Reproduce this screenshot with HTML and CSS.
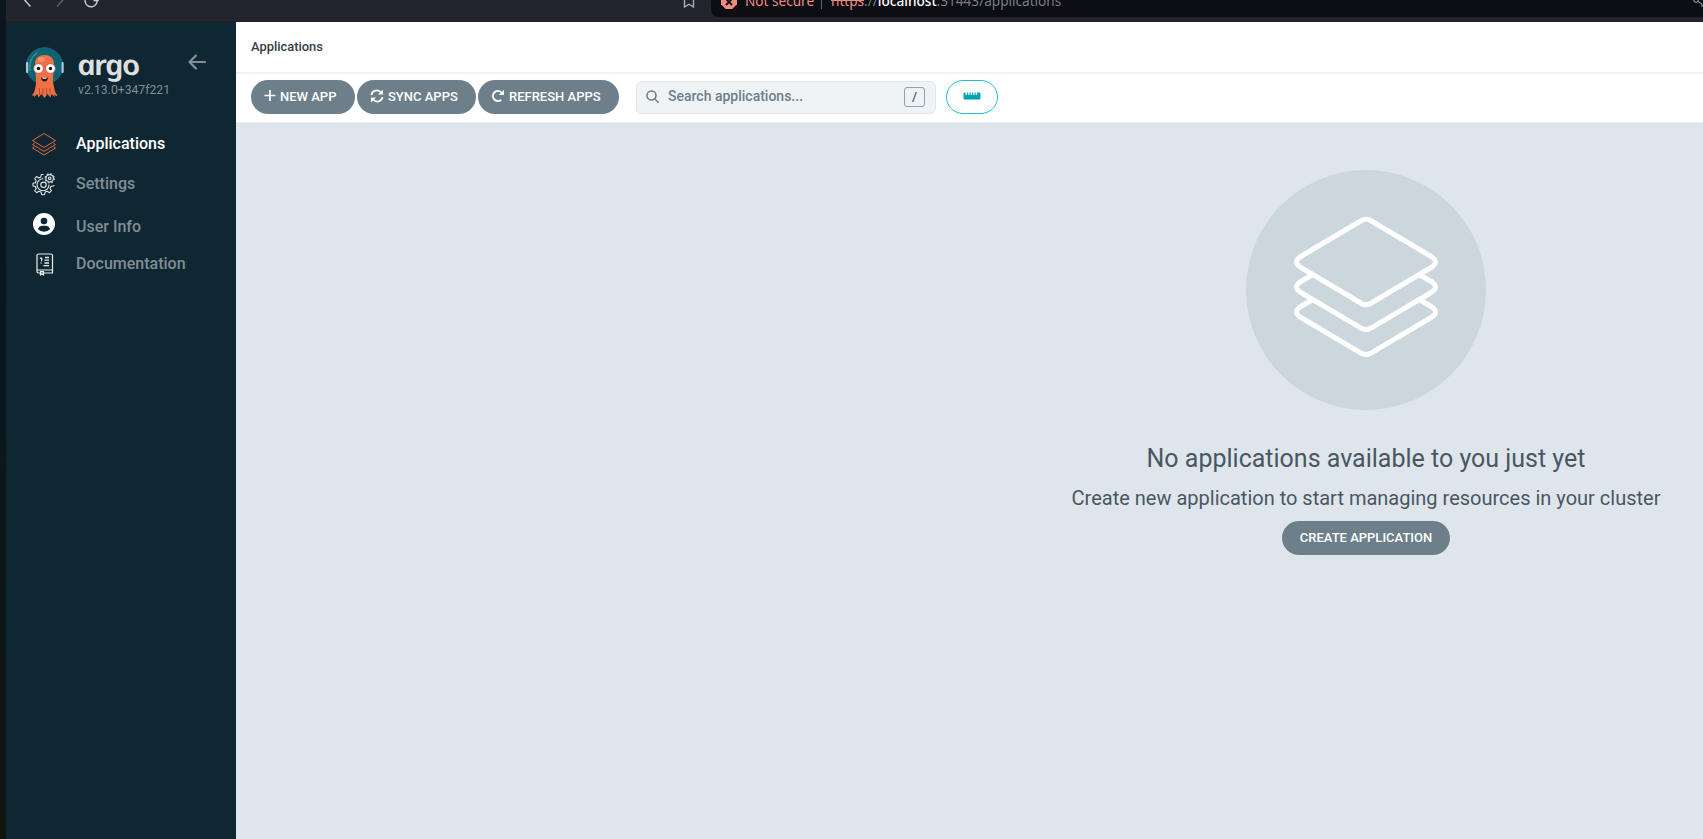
FILE: index.html
```html
<!DOCTYPE html>
<html lang="en">
<head>
<meta charset="utf-8">
<title>Applications</title>
<link rel="stylesheet" href="styles.css">
</head>
<body>
<div class="desktop-edge"></div>
<div class="window">
  <div class="browser">
    <div class="browser-left">
      <svg class="nav-icons" width="120" height="22" viewBox="0 0 120 22" fill="none" stroke-width="1.5">
        <path d="M24.500-6 19 0.500 24.500 6.500" stroke="#c3c8d8"/>
        <path d="M51-6 56.500 0.500 51 6.500" stroke="#5c606c"/>
        <path d="M90.800-1A6 6 0 1 1 85-5.200" stroke="#c3c8d8"/>
        <path d="M87.500 0.500H92V-3" stroke="#c3c8d8"/>
      </svg>
      <svg class="bookmark" width="12" height="22" viewBox="0 0 12 22" fill="none" stroke="#a9adb8" stroke-width="1.400">
        <path d="M1.500-5V7L6 4.200 10.500 7V-5"/>
      </svg>
    </div>
    <div class="address">
      <svg class="warn" width="16" height="17" viewBox="0 0 16 17">
        <path d="M4.700-7H11.300L16-2.300V4.300L11.300 9H4.700L0 4.300V-2.300Z" fill="#f28b82"/>
        <path d="M5-1 11 5M11-1 5 5" stroke="#0d0e13" stroke-width="1.800"/>
      </svg>
      <span class="not-secure">Not secure</span>
      <span class="divider"></span>
      <span class="url"><s>https</s>://<b>localhost</b>:31443/applications</span>
      <svg class="share" width="10" height="17" viewBox="0 0 10 17" fill="none" stroke="#aeb1b9">
        <circle cx="3" cy="0" r="2.300"/><path d="M5 1.500 9 4V7"/>
      </svg>
    </div>
  </div>
  <div class="app">
    <nav class="sidebar">
      <div class="brand">
        <svg class="mascot" width="40" height="53" viewBox="0 0 40 53">
          <circle cx="19.500" cy="20" r="18.300" fill="#0d6470" stroke="#225f76" stroke-width="1"/>
          <path d="M5 25C4 16 7 10 12 7" fill="none" stroke="#3d8793" stroke-width="1.500"/>
          <rect x="1" y="16" width="2.200" height="11" rx="1" fill="#a8c8e2"/>
          <rect x="36.500" y="16" width="2.200" height="11" rx="1" fill="#a8c8e2"/>
          <path d="M10 18C10 12 14 9 19.500 9S29 12 29 18C29 24 28 28 28 33 28 38 28 44 30 51L26.500 48 25.500 51.500 22.500 48 19.500 52 16.500 48 13.500 51.500 12.500 48 9 51C11 44 11 38 11 33 11 28 10 24 10 18Z" fill="#ee7147"/>
          <path d="M14.500 42V49M18 42V49M21.500 42V49M25 42V48" stroke="#bd4b2e" stroke-width="1"/>
          <path d="M12 38C10.500 44 11 48 7.500 49.500M27.500 38C29 44 28.500 48 32 49.500" fill="none" stroke="#ee7147" stroke-width="1.800"/>
          <ellipse cx="16.500" cy="13.500" rx="3.500" ry="2.300" fill="#f59372"/>
          <circle cx="13.500" cy="22.500" r="4.800" fill="#fff" stroke="#cf4e33" stroke-width=".7"/>
          <circle cx="25.500" cy="22.500" r="4.800" fill="#fff" stroke="#cf4e33" stroke-width=".7"/>
          <circle cx="13.500" cy="22.500" r="1.700" fill="#111"/><circle cx="25.500" cy="22.500" r="1.700" fill="#111"/>
          <path d="M16 31.500Q19.500 33 23 31.500 22.500 35.500 19.500 35.500T16 31.500Z" fill="#201417"/>
          <path d="M17.500 32Q19.500 33 21.500 32" stroke="#fff" fill="none"/>
        </svg>
        <div class="brand-text">
          <div class="wordmark">argo</div>
          <div class="version">v2.13.0+347f221</div>
        </div>
        <svg class="collapse" width="18" height="16" viewBox="0 0 18 16" fill="none" stroke="#858e94" stroke-width="2.200" stroke-linecap="round" stroke-linejoin="round">
          <path d="M8 1.500 1.500 8 8 14.500M1.500 8H17"/>
        </svg>
      </div>
      <ul class="menu">
        <li class="item active">
          <svg width="26" height="26" viewBox="0 0 26 26" fill="none" stroke="#e5683c" stroke-width="1" stroke-linejoin="round">
            <path d="M13 2.500 24.500 9.500 13 16.500 1.500 9.500Z"/><path d="M3.500 12 1.500 13.500 13 20.300 24.500 13.500 22.500 12M3.500 15.500 1.500 17 13 24 24.500 17 22.500 15.500"/>
          </svg>
          <span>Applications</span>
        </li>
        <li class="item settings">
          <svg width="26" height="26" viewBox="0 0 26 26" fill="none" stroke="#e4e8ea" stroke-width="1.100" stroke-linejoin="round">
            <path d="M12.500 3.500 10.300 3.500 9.800 6 7.700 7 5.500 5.500 3.700 7.500 5.200 9.700 4.400 11.800 2 12.300V15L4.400 15.500 5.200 17.500 3.700 19.700 5.700 21.700 7.900 20.200 10 21 10.700 23.700H13.500L14.200 21 16.200 20.200 18.500 21.700 20.500 19.700 19 17.500 19.900 15.500 23.500 14.500"/>
            <path d="M12.500 7.800A6 6 0 1 0 18 13.500"/><circle cx="12.500" cy="13.800" r="2.700"/>
            <circle cx="18.700" cy="7.300" r="3.700"/><circle cx="18.700" cy="7.300" r="1.300"/><circle cx="18.700" cy="7.300" r="4.600" stroke-dasharray="1.800 1.812"/>
          </svg>
          <span>Settings</span>
        </li>
        <li class="item user">
          <svg width="26" height="26" viewBox="0 0 26 26">
            <circle cx="13" cy="13" r="11" fill="#fff"/><circle cx="13" cy="10" r="3.300" fill="#0f2733"/>
            <path d="M6.800 18Q8.500 14.700 11 14.700H15Q17.500 14.700 19.200 18 16.500 20.800 13 20.800T6.800 18Z" fill="#0f2733"/>
          </svg>
          <span>User Info</span>
        </li>
        <li class="item docs">
          <svg width="26" height="26" viewBox="0 0 26 26" fill="none" stroke="#e8ebed" stroke-width="1.200">
            <path d="M7.500 3H20Q21.500 3 21.500 4.500V22H7.500Q6 22 6 20.500V4.500Q6 3 7.500 3ZM6 20.500Q6 19 7.500 19H21.500"/>
            <path d="M14 6.500H18M13.500 9.200H18M13.500 12H18M12.500 14.700H18M9 7.500Q10.800 6 10.800 8T10 10M10 11.500V12.500" stroke-width="1.300"/>
            <path d="M9.500 20.500V24L11 23 12.500 24V20.500Z"/>
          </svg>
          <span>Documentation</span>
        </li>
      </ul>
    </nav>
    <main class="main">
      <header class="topbar">Applications</header>
      <div class="toolbar">
        <button class="btn btn-new"><svg width="12" height="14" viewBox="0 0 12 14" fill="none" stroke="#fff" stroke-width="1.700"><path d="M6 1V12M.500 6.500H11.500"/></svg>NEW APP</button>
        <button class="btn btn-sync"><svg width="14" height="14" viewBox="0 0 14 14" fill="none" stroke="#fff" stroke-width="1.800"><path d="M1.500 6A5.200 5.200 0 0 1 10.800 3.500M12.500 8A5.200 5.200 0 0 1 3.200 10.500"/><path d="M13 .500V5.400H8ZM1 13.500V8.600H6Z" fill="#fff" stroke="none"/></svg>SYNC APPS</button>
        <button class="btn btn-refresh"><svg width="14" height="14" viewBox="0 0 14 14" fill="none" stroke="#fff" stroke-width="1.900"><path d="M10.300 10.700A5 5 0 1 1 10.300 3.300"/><path d="M13 .700V5.900H7.800Z" fill="#fff" stroke="none"/></svg>REFRESH APPS</button>
        <div class="search">
          <svg width="14" height="14" viewBox="0 0 14 14" fill="none" stroke="#6d7f8b" stroke-width="1.600"><circle cx="5.500" cy="5.500" r="4.500"/><path d="M8.700 8.700 12.700 12.700"/></svg>
          <span class="placeholder">Search applications...</span>
          <kbd>/</kbd>
        </div>
        <button class="ruler" aria-label="Health bar"><svg width="18" height="8" viewBox="0 0 18 8"><path d="M1.500.500H2.600V3H4V.500H5.200V3H6.500V.500H7.700V3H9V.500H10.200V3H11.500V.500H12.700V3H14V.500H16.500Q17.500.500 17.500 1.500V6.500Q17.500 7.500 16.500 7.500H1.500Q.500 7.500.500 6.500V1.500Q.500.500 1.500.500Z" fill="#00a2b3"/></svg></button>
      </div>
      <section class="content">
        <div class="empty">
          <div class="disc">
            <svg width="150" height="150" viewBox="0 0 150 150" fill="none" stroke="#fff" stroke-width="5" stroke-linejoin="round">
              <path d="M70.500 6.500Q75 4 79.500 6.500L141 43Q148 48 141 53L79.500 89.500Q75 92 70.500 89.500L9 53Q2 48 9 43Z"/>
              <path d="M21 61 9 68Q2 73 9 78L70.500 114.300Q75 116.800 79.500 114.300L141 78Q148 73 141 68L129 61"/>
              <path d="M21 86 9 93Q2 98 9 103L70.500 139.300Q75 141.800 79.500 139.300L141 103Q148 98 141 93L129 86"/>
            </svg>
          </div>
          <h4>No applications available to you just yet</h4>
          <h5>Create new application to start managing resources in your cluster</h5>
          <button class="btn btn-create">CREATE APPLICATION</button>
        </div>
      </section>
    </main>
  </div>
</div>
</body>
</html>
```

FILE: styles.css
```css
* { box-sizing: border-box; }
body {
  margin: 0;
  width: 1703px;
  height: 839px;
  display: flex;
  overflow: hidden;
  font-family: Roboto, "Liberation Sans", sans-serif;
  color: #363c4a;
}
.desktop-edge { width: 6px; flex: none; background: linear-gradient(#0d151e, #0c171d 50%, #10140f); }
.window { flex: 1; min-width: 0; display: flex; flex-direction: column; }

.browser { height: 22px; flex: none; display: flex; background: #23252d; border-bottom: 1px solid #211e29; }
.browser-left { width: 705px; display: flex; justify-content: space-between; padding-right: 16px; }
.address {
  flex: 1;
  height: 17px;
  display: flex;
  background: #0d0e13;
  border-bottom-left-radius: 8px;
  overflow: hidden;
  padding-left: 10px;
  font: 15px/18px "Noto Sans", sans-serif;
}
.not-secure { color: #f28b82; margin: -8px 0 0 8px; width: 68px; white-space: nowrap; font-size: 13.6px; }
.divider { width: 1px; height: 9px; background: #62656d; margin-left: 8px; }
.url { color: #797c84; margin: -8px auto 0 9px; white-space: nowrap; font-size: 13.6px; }
.url s { color: #f28b82; }
.url b { color: #fff; font-weight: 500; }

.app { flex: 1; display: flex; min-height: 0; }
.sidebar { width: 230px; flex: none; background: #0f2733; padding: 24px 0 0 19px; }
.brand { display: flex; height: 56px; }
.brand-text { margin-left: 13px; width: 110px; }
.wordmark {
  height: 38px;
  padding-top: 2px;
  font: italic 600 28px/32px "Noto Sans", sans-serif;
  letter-spacing: -1.6px;
  transform: scaleX(1.14) skewX(12deg);
  transform-origin: 0 25px;
  color: #dee0df;
}
.version { font-size: 12.2px; line-height: 14px; margin-top: -1px; color: #818d94; }
.collapse { margin: 8px 0 0; }
.menu { list-style: none; margin: 28px 0 0; padding: 0 0 0 6px; }
.item { display: flex; align-items: center; height: 40px; gap: 19px; margin: 0; font-size: 16px; font-weight: 500; color: #818d94; }
.item svg { flex: none; margin-top: 2px; }
.item.active { color: #fff; height: 26px; }
.item.settings { margin-top: 14px; height: 26px; }
.item.user { margin-top: 17px; height: 26px; }
.item.user svg { margin-top: -5px; }
.item.docs { margin-top: 11px; height: 26px; }

.main { flex: 1; min-width: 0; display: flex; flex-direction: column; background: #dee6ec; overflow: hidden; }
.topbar { height: 52px; flex: none; background: #fff; border-bottom: 2px solid #eff3f6; padding-left: 15px; font-size: 12.9px; line-height: 50px; font-weight: 500; }
.toolbar { height: 49px; flex: none; display: flex; align-items: flex-start; background: #fff; border-bottom: 1px solid #e8edf1; padding: 6px 0 0 15px; }
.btn {
  height: 34px;
  display: flex;
  align-items: center;
  border: 0;
  border-radius: 17px;
  background: #6d7f8b;
  color: #fff;
  font: 500 13px/34px Roboto, sans-serif;
  white-space: nowrap;
  padding: 0 0 1px 13px;
  margin-right: 2px;
}
.btn svg { margin: -2px 4px 0 0; flex: none; }
.btn-new { width: 104px; }
.btn-sync { width: 119px; }
.btn-sync svg, .btn-refresh svg { margin: -2px 4px 0 0; }
.btn-refresh { width: 141px; margin-right: 17px; }
.search { width: 300px; height: 33px; margin-top: 1px; display: flex; align-items: center; background: #eff3f6; border: 1px solid #dee6ec; border-radius: 6px; padding: 0 10px 0 9px; }
.search svg { margin-top: -2px; }
.placeholder { margin: -3px auto 0 8px; font-size: 14px; font-weight: 500; color: #6d7f8b; }
kbd { width: 21px; height: 20px; margin-top: -1px; border: 1px solid #8fa4b1; border-radius: 3px; font: 500 13px/18px Roboto, sans-serif; text-align: center; color: #495763; }
.ruler { width: 52px; height: 34px; margin-left: 10px; padding: 0 0 2px; border: 1px solid #1fbdd0; border-radius: 17px; background: #fff; display: flex; align-items: center; justify-content: center; }

.content { width: 2260px; flex: 1; padding-top: 47px; }
.empty { display: flex; flex-direction: column; align-items: center; color: #495763; }
.disc { width: 240px; height: 240px; border-radius: 50%; background: #ccd6dd; display: flex; align-items: center; justify-content: center; }
.disc svg { margin-top: -2px; }
h4 { margin: 31px 0 0; font-size: 25px; line-height: 36px; font-weight: 400; }
h5 { margin: 6px 0 0; font-size: 20px; line-height: 30px; font-weight: 400; }
.btn-create { width: 168px; margin: 8px 0 0; padding: 0 0 1px; justify-content: center; }
```
